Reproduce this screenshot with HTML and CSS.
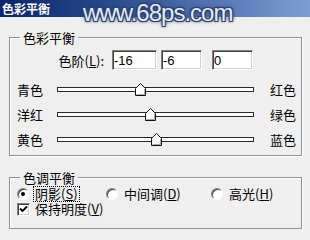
FILE: index.html
```html
<!DOCTYPE html>
<html lang="zh-CN">
  <head>
    <meta charset="UTF-8" />
    <title>色彩平衡</title>
    <link rel="stylesheet" href="styles.css">
  </head>
  <body>
    <div class="titleBar">色彩平衡</div>
    <div class="mark">www.68ps.com</div>

    <fieldset class="group">
      <legend>色彩平衡</legend>
      <div class="levelRow">
        <label class="levelLabel">色阶(<u>L</u>):</label>
        <input class="level w1" type="text" value="-16" />
        <input class="level w2" type="text" value="-6" />
        <input class="level w3" type="text" value="0" />
      </div>
      <!-- 滑块位置 = (值 + 100) / 200 -->
      <div class="slideRow first">
        <span class="from">青色</span>
        <div class="track">
          <svg class="thumb" style="left: 42%" width="11" height="13" viewBox="0 0 11 13">
            <path d="M5.5 0.5 L10.5 5.5 V12.5 H0.5 V5.5 Z" fill="#fff" stroke="#111" />
            <path d="M9.5 6 V11.5 H1.5" fill="none" stroke="#a8a8a8" />
          </svg>
        </div>
        <span class="to">红色</span>
      </div>
      <div class="slideRow">
        <span class="from">洋红</span>
        <div class="track">
          <svg class="thumb" style="left: 47%" width="11" height="13" viewBox="0 0 11 13">
            <path d="M5.5 0.5 L10.5 5.5 V12.5 H0.5 V5.5 Z" fill="#fff" stroke="#111" />
            <path d="M9.5 6 V11.5 H1.5" fill="none" stroke="#a8a8a8" />
          </svg>
        </div>
        <span class="to">绿色</span>
      </div>
      <div class="slideRow">
        <span class="from">黄色</span>
        <div class="track">
          <svg class="thumb" style="left: 50%" width="11" height="13" viewBox="0 0 11 13">
            <path d="M5.5 0.5 L10.5 5.5 V12.5 H0.5 V5.5 Z" fill="#fff" stroke="#111" />
            <path d="M9.5 6 V11.5 H1.5" fill="none" stroke="#a8a8a8" />
          </svg>
        </div>
        <span class="to">蓝色</span>
      </div>
    </fieldset>

    <fieldset class="group tone">
      <legend>色调平衡</legend>
      <div class="radioRow">
        <label class="opt o1"><span class="radio on"></span><span class="txt focus">阴影(<u>S</u>)</span></label>
        <label class="opt o2"><span class="radio"></span><span class="txt">中间调(<u>D</u>)</span></label>
        <label class="opt"><span class="radio"></span><span class="txt">高光(<u>H</u>)</span></label>
      </div>
      <label class="checkRow">
        <span class="box">
          <svg width="11" height="11" viewBox="0 0 11 11">
            <path d="M2 4.5 L4.5 7 L9 2.5" fill="none" stroke="#000" stroke-width="1.8" />
          </svg>
        </span>
        <span class="txt">保持明度(<u>V</u>)</span>
      </label>
    </fieldset>
  </body>
</html>
```

FILE: styles.css
```css
body {
  margin: 0;
  padding: 0;
  background: #efefef;
  font-family: "Noto Sans CJK SC", sans-serif;
  font-size: 13px;
  color: #000;
}
.titleBar {
  height: 17px;
  line-height: 17px;
  padding-left: 2px;
  background: linear-gradient(to right, #0a246a, #2a4a8c 35%, #7e9cd4);
  color: #fff;
  font-size: 12px;
  font-weight: bold;
}
.mark {
  position: absolute;
  left: 83px;
  top: 1px;
  font-family: "Liberation Sans", Arial, sans-serif;
  font-size: 24px;
  line-height: 24px;
  letter-spacing: -1px;
  color: #e2eaf8;
  text-shadow: -1px -1px 0 #2c406a, 1px -1px 0 #2c406a, -1px 1px 0 #2c406a,
    1px 1px 0 #2c406a, 0 0 3px #2c406a, 0 0 4px #2c406a;
}
.group {
  margin: 13px 8px 0 9px;
  padding: 0 0 3px;
  min-width: 0;
  border: 1px solid #919191;
  box-shadow: inset 1px 1px #fff, 1px 1px #fff;
}
.group legend {
  margin-left: 10px;
  padding: 0 3px;
  line-height: 15px;
  background: #efefef;
}
.tone {
  margin-top: 14px;
  padding-bottom: 12px;
}
.levelRow {
  display: flex;
  align-items: center;
  height: 20px;
  margin-top: 5px;
}
.levelLabel {
  width: 94px;
  margin-right: 8px;
  text-align: right;
}
.level {
  box-sizing: border-box;
  height: 20px;
  margin: 0;
  padding: 0 1px;
  border: 1px solid;
  border-color: #808080 #fff #fff #808080;
  box-shadow: inset 1px 1px #404040, inset -1px -1px #d4d0c8;
  background: #fff;
  font-family: "Liberation Sans", Arial, sans-serif;
  font-size: 13px;
  color: #000;
  outline: none;
}
.w1 {
  width: 45px;
}
.w2 {
  width: 41px;
  margin-left: 4px;
}
.w3 {
  width: 41px;
  margin-left: 10px;
}
.slideRow {
  display: flex;
  align-items: center;
  height: 25px;
  padding-left: 7px;
}
.slideRow.first {
  margin-top: 7px;
}
.from {
  width: 40px;
}
.track {
  position: relative;
  width: 197px;
  height: 5px;
  background: #fff;
  box-shadow: inset 0 0 0 1px #2a2a2a;
}
.thumb {
  position: absolute;
  top: -4px;
  margin-left: -5px;
  display: block;
}
.to {
  margin-left: 16px;
}
.radioRow {
  display: flex;
  align-items: center;
  height: 16px;
  margin-top: 1px;
  padding-left: 7px;
}
.opt {
  display: flex;
  align-items: center;
}
.o1 {
  width: 89px;
}
.o2 {
  width: 105px;
}
.radio {
  box-sizing: border-box;
  width: 12px;
  height: 12px;
  margin-right: 4px;
  border: 1px solid;
  border-color: #808080 #fff #fff #808080;
  border-radius: 50%;
  box-shadow: inset 1px 1px #404040;
  background: #fff;
  position: relative;
}
.radio.on::after {
  content: "";
  position: absolute;
  left: 3px;
  top: 3px;
  width: 4px;
  height: 4px;
  border-radius: 50%;
  background: #000;
}
.txt {
  padding: 0 1px;
  border: 1px dotted transparent;
  line-height: 14px;
}
.txt.focus {
  border-color: #000;
}
.checkRow {
  display: flex;
  align-items: center;
  height: 14px;
  padding-left: 7px;
}
.checkRow .txt {
  line-height: 12px;
}
.box {
  box-sizing: border-box;
  width: 13px;
  height: 13px;
  margin-right: 3px;
  border: 1px solid;
  border-color: #808080 #fff #fff #808080;
  box-shadow: inset 1px 1px #404040, inset -1px -1px #d4d0c8;
  background: #fff;
}
.box svg {
  display: block;
}
```
